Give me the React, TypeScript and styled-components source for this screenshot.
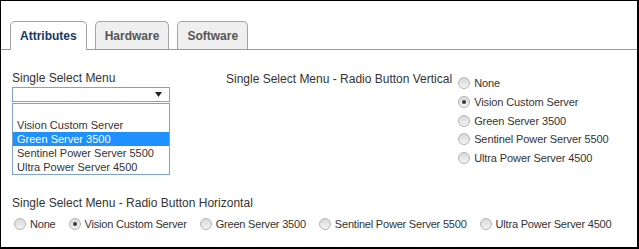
import styled, { createGlobalStyle } from "styled-components";

const GlobalStyle = createGlobalStyle`
  body {
    margin: 0;
    background: #fff;
    font-family: "Liberation Sans", Arial, sans-serif;
  }
`;

const Frame = styled.div`
  width: 639px;
  height: 249px;
  box-sizing: border-box;
  border: 1px solid #000;
  border-right-width: 2px;
  border-bottom-width: 2px;
  overflow: hidden;
  color: #333;
`;

const TabBar = styled.div`
  display: flex;
  gap: 8px;
  padding: 20px 0 0 9px;
  border-bottom: 1px solid #9a9a9a;
`;

const Tab = styled.div<{ $active?: boolean }>`
  box-sizing: border-box;
  padding: 0 9px;
  display: flex;
  align-items: center;
  border: 1px solid #a3a3a3;
  border-bottom: none;
  border-radius: 5px 5px 0 0;
  font-size: 12px;
  font-weight: bold;
  background: ${(p) => (p.$active ? "#fff" : "#efefef")};
  color: ${(p) => (p.$active ? "#12386b" : "#555")};
  margin-bottom: ${(p) => (p.$active ? "-1px" : "0")};
  height: ${(p) => (p.$active ? "29px" : "28px")};
`;

const Content = styled.div`
  padding: 0 11px;
`;

const TopRow = styled.div`
  display: flex;
  align-items: flex-start;
  margin-top: 21px;
`;

const FieldLabel = styled.div`
  font-size: 12px;
  line-height: 14px;
  white-space: nowrap;
`;

const SelectField = styled.div`
  width: 158px;
`;

const SelectBox = styled.div`
  margin-top: 2px;
  height: 15px;
  box-sizing: border-box;
  border: 1px solid #7da2ce;
  display: flex;
  align-items: center;
  justify-content: flex-end;
  padding-right: 7px;
`;

const OptionList = styled.div`
  margin-top: 1px;
  border: 1px solid #7da2ce;
`;

const Option = styled.div<{ $selected?: boolean }>`
  height: 14px;
  line-height: 14px;
  font-size: 11px;
  padding-left: 4px;
  white-space: nowrap;
  background: ${(p) => (p.$selected ? "#1e90ff" : "transparent")};
  color: ${(p) => (p.$selected ? "#fff" : "#333")};
`;

const VerticalField = styled.div`
  display: flex;
  align-items: flex-start;
  margin-left: 56px;
  margin-top: 1px;
`;

const VerticalGroup = styled.div`
  display: flex;
  flex-direction: column;
  margin-left: 6px;
  margin-top: 2px;
`;

const RadioItem = styled.label<{ $tight?: boolean }>`
  display: flex;
  align-items: center;
  gap: 4px;
  height: ${(p) => (p.$tight ? "18px" : "18.7px")};
  font-size: 11px;
  letter-spacing: ${(p) => (p.$tight ? "-0.2px" : "-0.1px")};
  white-space: nowrap;
`;

const Radio = styled.span<{ $checked?: boolean }>`
  width: 12px;
  height: 12px;
  box-sizing: border-box;
  border-radius: 50%;
  border: 1px solid #b4b4b4;
  background: linear-gradient(#d9d9d9, #f3f3f3);
  display: flex;
  align-items: center;
  justify-content: center;
  flex: none;

  &::after {
    content: "";
    width: 4px;
    height: 4px;
    border-radius: 50%;
    background: ${(p) => (p.$checked ? "#3a3a3a" : "transparent")};
  }
`;

const HorizontalField = styled.div`
  margin-top: 21px;
`;

const HorizontalGroup = styled.div`
  display: flex;
  gap: 13px;
  margin-top: 5px;
  padding-left: 2px;
`;

const options = [
  "None",
  "Vision Custom Server",
  "Green Server 3500",
  "Sentinel Power Server 5500",
  "Ultra Power Server 4500",
];

const Arrow = () => (
  <svg width="7" height="5" viewBox="0 0 7 5">
    <path d="M0 0h7L3.5 5z" fill="#222" />
  </svg>
);

export default function App() {
  return (
    <Frame>
      <GlobalStyle />
      <TabBar>
        <Tab $active>Attributes</Tab>
        <Tab>Hardware</Tab>
        <Tab>Software</Tab>
      </TabBar>
      <Content>
        <TopRow>
          <SelectField>
            <FieldLabel>Single Select Menu</FieldLabel>
            <SelectBox>
              <Arrow />
            </SelectBox>
            <OptionList>
              <Option />
              {options.slice(1).map((o) => (
                <Option key={o} $selected={o === "Green Server 3500"}>
                  {o}
                </Option>
              ))}
            </OptionList>
          </SelectField>
          <VerticalField>
            <FieldLabel>Single Select Menu - Radio Button Vertical</FieldLabel>
            <VerticalGroup>
              {options.map((o) => (
                <RadioItem key={o}>
                  <Radio $checked={o === "Vision Custom Server"} />
                  {o}
                </RadioItem>
              ))}
            </VerticalGroup>
          </VerticalField>
        </TopRow>
        <HorizontalField>
          <FieldLabel>Single Select Menu - Radio Button Horizontal</FieldLabel>
          <HorizontalGroup>
            {options.map((o) => (
              <RadioItem key={o} $tight>
                <Radio $checked={o === "Vision Custom Server"} />
                {o}
              </RadioItem>
            ))}
          </HorizontalGroup>
        </HorizontalField>
      </Content>
    </Frame>
  );
}
